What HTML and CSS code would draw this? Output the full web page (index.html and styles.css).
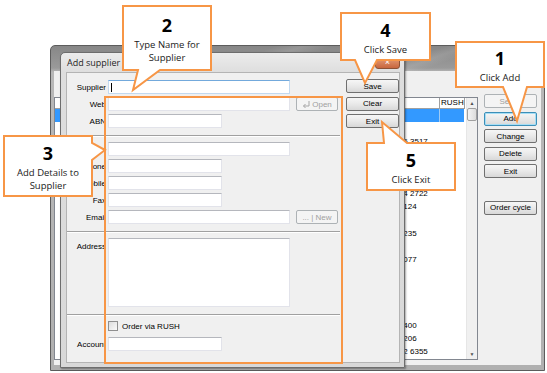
FILE: index.html
```html
<!DOCTYPE html>
<html lang="en">
<head>
    <meta charset="UTF-8">
    <title>Add supplier - walkthrough</title>
    <link rel="stylesheet" href="styles.css">
</head>
<body>
<div class="stage">

    <!-- supplier list window (behind) -->
    <div class="window main">
        <div class="titlebar"></div>
        <div class="client">
            <div class="list">
                <div class="rows">
                    <div class="row head">
                        <span class="c-name"></span>
                        <span class="c-phone"></span>
                        <span class="c-rush">RUSH</span>
                    </div>
                    <div class="row selected"><span class="c-name"></span><span class="c-phone"></span><span class="c-rush"></span></div>
                    <div class="row"><span class="c-name"></span><span class="c-phone"></span><span class="c-rush"></span></div>
                    <div class="row"><span class="c-name"></span><span class="c-phone">9555 3517</span><span class="c-rush"></span></div>
                    <div class="row"><span class="c-name"></span><span class="c-phone"></span><span class="c-rush"></span></div>
                    <div class="row"><span class="c-name"></span><span class="c-phone"></span><span class="c-rush"></span></div>
                    <div class="row"><span class="c-name"></span><span class="c-phone"></span><span class="c-rush"></span></div>
                    <div class="row"><span class="c-name"></span><span class="c-phone">9554 2722</span><span class="c-rush"></span></div>
                    <div class="row"><span class="c-name"></span><span class="c-phone">553124</span><span class="c-rush"></span></div>
                    <div class="row"><span class="c-name"></span><span class="c-phone"></span><span class="c-rush"></span></div>
                    <div class="row"><span class="c-name"></span><span class="c-phone">558235</span><span class="c-rush"></span></div>
                    <div class="row"><span class="c-name"></span><span class="c-phone"></span><span class="c-rush"></span></div>
                    <div class="row"><span class="c-name"></span><span class="c-phone">551077</span><span class="c-rush"></span></div>
                    <div class="row"><span class="c-name"></span><span class="c-phone"></span><span class="c-rush"></span></div>
                    <div class="row"><span class="c-name"></span><span class="c-phone"></span><span class="c-rush"></span></div>
                    <div class="row"><span class="c-name"></span><span class="c-phone"></span><span class="c-rush"></span></div>
                    <div class="row"><span class="c-name"></span><span class="c-phone"></span><span class="c-rush"></span></div>
                    <div class="row"><span class="c-name"></span><span class="c-phone">554400</span><span class="c-rush"></span></div>
                    <div class="row"><span class="c-name"></span><span class="c-phone">551206</span><span class="c-rush"></span></div>
                    <div class="row"><span class="c-name"></span><span class="c-phone">9552 6355</span><span class="c-rush"></span></div>
                </div>
                <div class="scrollbar">
                    <span class="arrow">&#9650;</span>
                    <span class="thumb"></span>
                    <span class="track"></span>
                    <span class="arrow">&#9660;</span>
                </div>
            </div>
            <div class="side">
                <button class="btn" disabled>Select</button>
                <button class="btn focus">Add</button>
                <button class="btn">Change</button>
                <button class="btn">Delete</button>
                <button class="btn">Exit</button>
                <button class="btn cycle">Order cycle</button>
            </div>
        </div>
    </div>

    <!-- Add supplier dialog -->
    <div class="window dialog">
        <div class="titlebar">
            <span class="title">Add supplier</span>
            <span class="close">&#215;</span>
        </div>
        <div class="client">
            <div class="form">
                <div class="group">
                    <div class="line"><label>Supplier</label><div class="field wide active"><span class="caret"></span></div></div>
                    <div class="line">
                        <label>Web</label><div class="field wide"></div>
                        <button class="btn mini" disabled>
                            <svg width="8" height="7" viewBox="0 0 8 7"><path d="M7 0V5H1.5M3.5 3L1.5 5L3.5 7" fill="none" stroke="#a6a6a6" stroke-width="1"/></svg>
                            Open
                        </button>
                    </div>
                    <div class="line"><label>ABN</label><div class="field short"></div></div>
                </div>
                <div class="sep"></div>
                <div class="group">
                    <div class="line"><label>Contact</label><div class="field wide"></div></div>
                    <div class="line"><label>Phone</label><div class="field short"></div></div>
                    <div class="line"><label>Mobile</label><div class="field short"></div></div>
                    <div class="line"><label>Fax</label><div class="field short"></div></div>
                    <div class="line">
                        <label>Email</label><div class="field wide"></div>
                        <button class="btn mini" disabled>... | New</button>
                    </div>
                </div>
                <div class="sep"></div>
                <div class="group">
                    <div class="line tall"><label>Address</label><div class="field wide area"></div></div>
                </div>
                <div class="sep"></div>
                <div class="group loose">
                    <div class="line check"><label></label><span class="box"></span><span>Order via RUSH</span></div>
                    <div class="line"><label>Account</label><div class="field short"></div></div>
                </div>
            </div>
            <div class="actions">
                <button class="btn">Save</button>
                <button class="btn">Clear</button>
                <button class="btn">Exit</button>
            </div>
        </div>
    </div>

    <!-- highlight around the detail fields -->
    <div class="highlight"></div>

    <!-- numbered callouts -->
    <div class="callout c1">
        <svg class="shape" width="90" height="47"><polygon points="1,1 89,1 89,46 72,46 62,80 48,46 1,46"/></svg>
        <div class="text"><b>1</b><span>Click Add</span></div>
    </div>
    <div class="callout c2">
        <svg class="shape" width="90" height="66"><polygon points="1,1 89,1 89,65 38,65 11,85 16,65 1,65"/></svg>
        <div class="text"><b>2</b><span>Type Name for<br>Supplier</span></div>
    </div>
    <div class="callout c3">
        <svg class="shape" width="90" height="62"><polygon points="1,1 89,1 89,8 102,15 89,25 89,61 1,61"/></svg>
        <div class="text"><b>3</b><span>Add Details to<br>Supplier</span></div>
    </div>
    <div class="callout c4">
        <svg class="shape" width="91" height="49"><polygon points="1,1 90,1 90,48 37,48 25,71 15,48 1,48"/></svg>
        <div class="text"><b>4</b><span>Click Save</span></div>
    </div>
    <div class="callout c5">
        <svg class="shape" width="90" height="49"><polygon points="1,1 18,1 16,-20 41,1 89,1 89,48 1,48"/></svg>
        <div class="text"><b>5</b><span>Click Exit</span></div>
    </div>

</div>
</body>
</html>
```

FILE: styles.css
```css
* { box-sizing: border-box; }

body {
    margin: 0;
    background: #fff;
    font-family: "Liberation Sans", Arial, sans-serif;
    font-size: 8px;
    color: #000;
}

.stage {
    position: relative;
    width: 547px;
    height: 373px;
    overflow: hidden;
}

/* windows */
.window {
    position: absolute;
    display: flex;
    flex-direction: column;
}

.main {
    left: 50px;
    top: 45px;
    width: 495px;
    height: 326px;
    border: 1px solid #5c5c5c;
    border-radius: 5px 5px 0 0;
    background: linear-gradient(#878787, #9a9a9a 22px, #b8b8b8 26px, #b0b0b0);
}

.main .titlebar {
    height: 25px;
    background: linear-gradient(160deg, transparent 40%, rgba(255,255,255,.12) 45%, transparent 50%, transparent 70%, rgba(255,255,255,.1) 74%, transparent 78%);
}

.main .client {
    flex: 1;
    margin: 0 3px 5px 3px;
    background: #f0f0f0;
    display: flex;
    align-items: flex-start;
}

.list {
    margin-top: 26px;
    width: 424px;
    height: 263px;
    border: 1px solid #828790;
    background: #fff;
    display: flex;
}

.rows { flex: 1; }

.row {
    display: flex;
    height: 13.15px;
    line-height: 13px;
}

.row.head {
    height: 10.5px;
    line-height: 10px;
    border-bottom: 1px solid #a0a0a0;
}

.c-name { width: 333px; }
.c-phone { width: 52px; padding-left: 2px; white-space: nowrap; overflow: hidden; border-right: 1px solid transparent; }
.c-rush { width: 24px; padding-left: 1px; }

.head .c-phone { border-right-color: #a0a0a0; }
.head .c-rush { border-right: 1px solid #a0a0a0; width: 25px; }

.row.selected span { background: #3399ff; }
.row.selected .c-phone { border-right-color: #9fcbf5; }

.scrollbar {
    width: 11px;
    margin-left: 1px;
    display: flex;
    flex-direction: column;
    background: #f0f0f0;
    border-left: 1px solid #e6e6e6;
}

.scrollbar .arrow {
    height: 10px;
    font-size: 5px;
    line-height: 10px;
    text-align: center;
    color: #505050;
}

.scrollbar .thumb {
    height: 13px;
    border: 1px solid #a0a0a0;
    border-radius: 2px;
    background: linear-gradient(90deg, #f4f4f4, #dcdcdc);
}

.scrollbar .track { flex: 1; }

.side {
    margin: 23px 0 0 6px;
    width: 53px;
    display: flex;
    flex-direction: column;
    gap: 3.5px;
}

.side .cycle { margin-top: 19px; }

/* buttons */
.btn {
    height: 14px;
    padding: 0;
    border: 1px solid #707070;
    border-radius: 2px;
    background: linear-gradient(#f6f6f6, #e9e9e9 50%, #d8d8d8);
    font-family: inherit;
    font-size: 8px;
    color: #000;
    display: flex;
    align-items: center;
    justify-content: center;
    gap: 2px;
}

.btn:disabled {
    border-color: #adb2b5;
    background: #f4f4f4;
    color: #a0a0a0;
}

.btn.focus {
    border-color: #3c8fb8;
    box-shadow: inset 0 0 0 1px #a6def5;
}

/* dialog */
.dialog {
    left: 60px;
    top: 52px;
    width: 345px;
    height: 316px;
    border: 1px solid #6d6d6d;
    border-radius: 5px 5px 0 0;
    background: linear-gradient(#ececec, #dedede 19px, #d8d8d8);
    box-shadow: 1px 1px 2px rgba(0,0,0,.35);
}

.dialog .titlebar {
    height: 19px;
    padding-left: 6px;
    display: flex;
    align-items: center;
    justify-content: space-between;
}

.title {
    font-family: "Open Sans", sans-serif;
    font-size: 9px;
    color: #1e1e1e;
}

.close {
    width: 25px;
    height: 13px;
    margin-right: 4px;
    border: 1px solid #8c5236;
    border-radius: 0 0 3px 3px;
    background: linear-gradient(#e7a27c, #c8663e);
    color: #fff;
    font-size: 9px;
    line-height: 11px;
    text-align: center;
}

.dialog .client {
    flex: 1;
    margin: 0 4px 4px 5px;
    border: 1px solid #b4b4b4;
    background: #f0f0f0;
    display: flex;
}

.form {
    width: 275px;
    padding-top: 7px;
    display: flex;
    flex-direction: column;
}

.group {
    display: flex;
    flex-direction: column;
    gap: 3px;
}

.group.loose { gap: 6px; }

.sep {
    height: 2px;
    margin: 7px 2px 5px 0;
    border-top: 1px solid #a0a0a0;
    border-bottom: 1px solid #fff;
}

.line {
    display: flex;
    align-items: center;
    height: 14px;
}

.line label {
    width: 39px;
    margin-right: 2px;
    text-align: right;
    white-space: nowrap;
    overflow: hidden;
}

.line.tall {
    height: auto;
    align-items: flex-start;
}

.line.tall label { padding-top: 4px; }

.line.check { height: 10px; gap: 4px; }
.line.check label { margin-right: -2px; }

.box {
    width: 10px;
    height: 10px;
    border: 1px solid #8f8f8f;
    background: linear-gradient(135deg, #dcdcdc, #fafafa);
}

.field {
    height: 14px;
    background: #fff;
    border: 1px solid #e2e3ea;
    border-top-color: #b5b7bd;
    position: relative;
}

.field.wide { width: 182px; }
.field.short { width: 114px; }
.field.area { height: 69px; }

.field.active {
    border-color: #c2d9f0;
    border-top-color: #73a9dc;
}

.caret {
    position: absolute;
    left: 2px;
    top: 2px;
    width: 1px;
    height: 9px;
    background: #000;
}

.btn.mini {
    width: 42px;
    margin-left: 6px;
}

.actions {
    flex: 1;
    padding: 6px 0 0 4px;
    display: flex;
    flex-direction: column;
    gap: 3.5px;
}

.actions .btn { width: 53px; }

/* highlight and callouts */
.highlight {
    position: absolute;
    left: 104px;
    top: 96px;
    width: 239px;
    height: 268px;
    border: 2px solid #f79646;
}

.callout {
    position: absolute;
}

.callout .shape {
    position: absolute;
    left: 0;
    top: 0;
    overflow: visible;
}

.callout polygon {
    fill: #fff;
    stroke: #f79646;
    stroke-width: 2;
}

.callout .text {
    position: relative;
    height: 100%;
    padding-top: 2px;
    display: flex;
    flex-direction: column;
    align-items: center;
    justify-content: center;
    gap: 3px;
    font-family: "Open Sans", sans-serif;
    text-align: center;
    color: #1a1a1a;
}

.callout b {
    font-size: 18px;
    line-height: 20px;
    font-weight: 700;
    color: #000;
}

.callout span {
    font-size: 9.5px;
    line-height: 13px;
}

.c1 { left: 455px; top: 41px; width: 90px; height: 47px; }
.c2 { left: 122px; top: 5px; width: 90px; height: 66px; }
.c3 { left: 3px; top: 135px; width: 90px; height: 62px; }
.c4 { left: 340px; top: 12px; width: 91px; height: 49px; }
.c5 { left: 366px; top: 142px; width: 90px; height: 49px; }
```
